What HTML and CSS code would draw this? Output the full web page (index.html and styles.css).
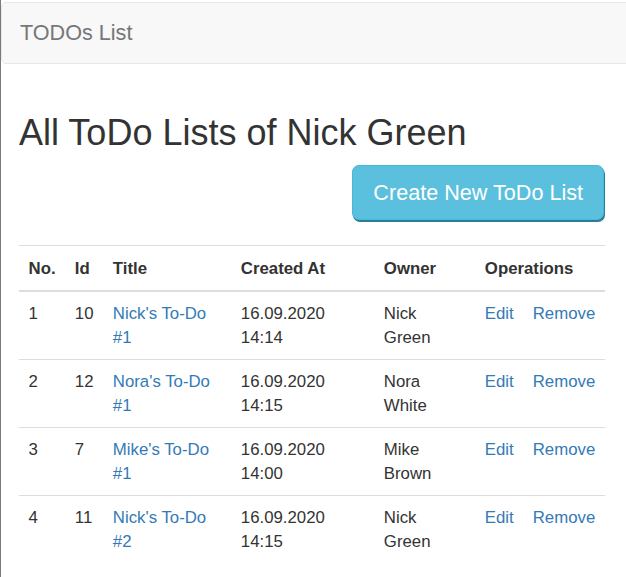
FILE: index.html
```html
<!DOCTYPE html>
<html lang="en">
<head>
<meta charset="utf-8">
<title>TODOs List</title>
<link rel="stylesheet" href="styles.css">
</head>
<body>
<nav class="navbar">
  <a class="brand" href="#">TODOs List</a>
</nav>
<main class="container">
  <h2 class="page-title">All ToDo Lists of Nick Green</h2>
  <div class="actions">
    <a class="btn-create" href="#">Create New ToDo List</a>
  </div>
  <table class="todo-table">
    <colgroup>
      <col class="c-no"><col class="c-id"><col class="c-title"><col class="c-date"><col class="c-owner"><col class="c-ops">
    </colgroup>
    <thead>
      <tr><th>No.</th><th>Id</th><th>Title</th><th>Created At</th><th>Owner</th><th>Operations</th></tr>
    </thead>
    <tbody>
      <tr><td>1</td><td>10</td><td><a href="#">Nick's To-Do #1</a></td><td>16.09.2020 14:14</td><td>Nick Green</td><td><a class="op" href="#">Edit</a><a class="op" href="#">Remove</a></td></tr>
      <tr><td>2</td><td>12</td><td><a href="#">Nora's To-Do #1</a></td><td>16.09.2020 14:15</td><td>Nora White</td><td><a class="op" href="#">Edit</a><a class="op" href="#">Remove</a></td></tr>
      <tr><td>3</td><td>7</td><td><a href="#">Mike's To-Do #1</a></td><td>16.09.2020 14:00</td><td>Mike Brown</td><td><a class="op" href="#">Edit</a><a class="op" href="#">Remove</a></td></tr>
      <tr><td>4</td><td>11</td><td><a href="#">Nick's To-Do #2</a></td><td>16.09.2020 14:15</td><td>Nick Green</td><td><a class="op" href="#">Edit</a><a class="op" href="#">Remove</a></td></tr>
    </tbody>
  </table>
</main>
</body>
</html>
```
FILE: styles.css
```css
html, body {
  margin: 0;
  padding: 0;
}
body {
  min-height: 100vh;
  box-sizing: border-box;
  border-left: 1px solid #7a7a7a;
  background: #fff;
  color: #333;
  font-family: "Liberation Sans", Arial, sans-serif;
  font-size: 16.8px;
  line-height: 24px;
  overflow-x: hidden;
}
a {
  color: #337ab7;
  text-decoration: none;
}
.navbar {
  margin: 2px -8px 0 0;
  height: 60px;
  background: #f8f8f8;
  border: 1px solid #e7e7e7;
  border-radius: 5px;
  display: flex;
  align-items: center;
}
.brand {
  padding: 0 18px;
  font-size: 21.6px;
  line-height: 60px;
  color: #777;
}
.container {
  padding: 25px 21px 0 18px;
}
.page-title {
  margin: 24px 0 12px;
  font-size: 36px;
  font-weight: 500;
  line-height: 1.1;
  color: #333;
}
.actions {
  display: flex;
  justify-content: flex-end;
  margin-top: 1px;
}
.btn-create {
  display: inline-block;
  padding: 12px 20px;
  font-size: 21.6px;
  line-height: 29px;
  color: #fff;
  background: #5bc0de;
  border: 1px solid #46b8da;
  border-radius: 7px;
  box-shadow: 1px 2px 0 #2c7e97;
  margin-right: 1px;
}
.todo-table {
  width: 100%;
  margin-top: 25px;
  border-collapse: collapse;
}
.c-no { width: 46px; }
.c-id { width: 38px; }
.c-title { width: 128px; }
.c-date { width: 143px; }
.c-owner { width: 101px; }
.todo-table th,
.todo-table td {
  padding: 9.5px 9.6px;
  text-align: left;
  line-height: 24px;
  vertical-align: top;
}
.todo-table th {
  padding-top: 11px;
  font-weight: bold;
  vertical-align: bottom;
  border-top: 1px solid #ddd;
  border-bottom: 2px solid #ddd;
}
.todo-table tbody tr + tr td {
  border-top: 1px solid #ddd;
}
.op {
  margin-right: 19px;
}
.op:last-child {
  margin-right: 0;
}
```
